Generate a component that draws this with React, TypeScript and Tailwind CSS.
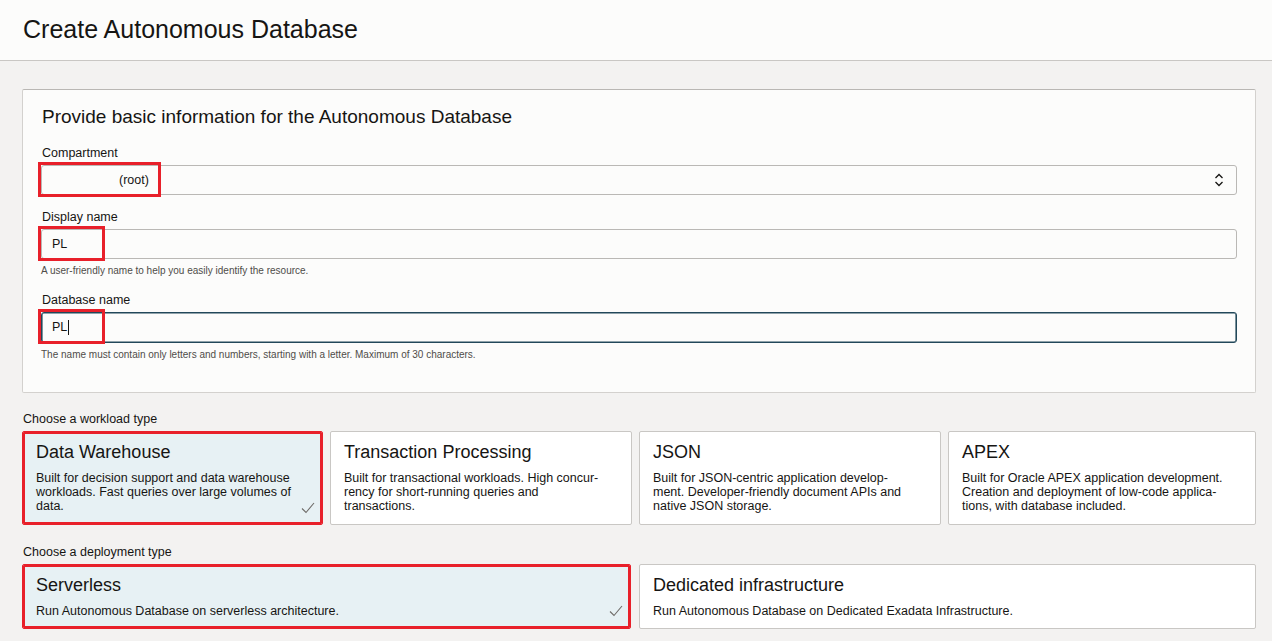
import React from 'react';

const font = { fontFamily: '"Liberation Sans", Arial, sans-serif' };

function RedMark({ w, h }: { w: number; h: number }) {
  return (
    <div
      className="pointer-events-none absolute -left-[3px] -top-[3px] border-[3px] border-[#e8202a]"
      style={{ width: w, height: h }}
    />
  );
}

function Check() {
  return (
    <svg width="14" height="12" viewBox="0 0 14 12" className="text-[#6f6c69]">
      <path d="M1 6.5 L5 10.5 L13 1" fill="none" stroke="currentColor" strokeWidth="1.1" />
    </svg>
  );
}

function Chevrons() {
  return (
    <svg width="10" height="14" viewBox="0 0 10 14" className="text-[#161513]">
      <path d="M1.5 5 L5 1.5 L8.5 5" fill="none" stroke="currentColor" strokeWidth="1.3" />
      <path d="M1.5 9 L5 12.5 L8.5 9" fill="none" stroke="currentColor" strokeWidth="1.3" />
    </svg>
  );
}

type Card = { title: string; lines: string[] };

const workloads: Card[] = [
  {
    title: 'Data Warehouse',
    lines: ['Built for decision support and data warehouse', 'workloads. Fast queries over large volumes of', 'data.'],
  },
  {
    title: 'Transaction Processing',
    lines: ['Built for transactional workloads. High concur-', 'rency for short-running queries and', 'transactions.'],
  },
  {
    title: 'JSON',
    lines: ['Built for JSON-centric application develop-', 'ment. Developer-friendly document APIs and', 'native JSON storage.'],
  },
  {
    title: 'APEX',
    lines: ['Built for Oracle APEX application development.', 'Creation and deployment of low-code applica-', 'tions, with database included.'],
  },
];

const deployments: Card[] = [
  { title: 'Serverless', lines: ['Run Autonomous Database on serverless architecture.'] },
  { title: 'Dedicated infrastructure', lines: ['Run Autonomous Database on Dedicated Exadata Infrastructure.'] },
];

function OptionCard({ card, selected, tall }: { card: Card; selected: boolean; tall?: boolean }) {
  return (
    <div
      className={
        'relative rounded-[2px] border px-[13px] pt-[9px] ' +
        (tall ? 'pb-[10px] ' : 'pb-[11px] ') +
        (selected
          ? 'border-[#e8202a] bg-[#e7f1f4] shadow-[inset_0_0_0_2px_#e8202a]'
          : 'border-[#c9c7c4] bg-white')
      }
    >
      <div className="text-[18px] leading-[22px] text-[#161513]">{card.title}</div>
      <div className="mt-2 text-[12.5px] leading-[14px] text-[#161513]">
        {card.lines.map((l) => (
          <div key={l} className="whitespace-nowrap">
            {l}
          </div>
        ))}
      </div>
      {selected && (
        <div className={'absolute right-[7px] ' + (tall ? 'bottom-[11px]' : 'bottom-[10px]')}>
          <Check />
        </div>
      )}
    </div>
  );
}

export default function App() {
  return (
    <div className="min-h-[641px] bg-[#f3f2f1] text-[#161513]" style={font}>
      <header className="h-[61px] border-b border-[#c9c7c4] bg-[#fcfcfb] px-[23px]">
        <h1 className="pt-[15px] text-[25px] leading-[28px]">Create Autonomous Database</h1>
      </header>

      <div className="pl-[22px] pr-[16px] pt-[28px]">
        <section className="rounded-[2px] border border-[#d3d1ce] border-t-[#b9b7b4] bg-[#fcfcfb] pl-[18px] pr-[18px] pt-[16px] pb-[31px]">
          <h2 className="pl-px text-[19px] leading-[22px]">Provide basic information for the Autonomous Database</h2>

          <label className="mt-[17px] block pl-px text-[12.5px] leading-[16px]">Compartment</label>
          <div className="relative mt-1">
            <div className="flex h-[30px] items-center justify-between rounded-[3px] border border-[#bab8b5] bg-[#fcfcfb] pl-[11px] pr-[12px]">
              <span className="pl-[66px] text-[12.5px]">(root)</span>
              <Chevrons />
            </div>
            <RedMark w={123} h={35} />
          </div>

          <label className="mt-[14px] block pl-px text-[12.5px] leading-[16px]">Display name</label>
          <div className="relative mt-1">
            <div className="flex h-[30px] items-center rounded-[3px] border border-[#bab8b5] bg-[#fcfcfb] px-[10px]">
              <span className="text-[12.5px]">PL</span>
            </div>
            <RedMark w={67} h={35} />
          </div>
          <p className="mt-[6px] text-[10px] leading-[12px] text-[#4f4c49]">
            A user-friendly name to help you easily identify the resource.
          </p>

          <label className="mt-[15px] block pl-px text-[12.5px] leading-[16px]">Database name</label>
          <div className="relative mt-1">
            <div className="flex h-[31px] items-center rounded-[3px] border border-[#22485a] bg-[#fcfcfb] px-[10px] shadow-[inset_0_0_0_0.6px_#22485a]">
              <span className="text-[12.5px]">PL</span>
              <span className="ml-[1px] h-[15px] w-px bg-[#161513]" />
            </div>
            <RedMark w={67} h={35} />
          </div>
          <p className="mt-[6px] text-[10px] leading-[12px] text-[#4f4c49]">
            The name must contain only letters and numbers, starting with a letter. Maximum of 30 characters.
          </p>
        </section>

        <div className="mt-[18px] pl-px text-[12.5px] leading-[16px]">Choose a workload type</div>
        <div className="mt-1 grid grid-cols-[301px_302px_302px_1fr] gap-[7px]">
          {workloads.map((c, i) => (
            <OptionCard key={c.title} card={c} selected={i === 0} />
          ))}
        </div>

        <div className="mt-[19px] pl-px text-[12.5px] leading-[16px]">Choose a deployment type</div>
        <div className="mt-1 grid grid-cols-[609px_1fr] gap-[8px]">
          {deployments.map((c, i) => (
            <OptionCard key={c.title} card={c} selected={i === 0} tall />
          ))}
        </div>
      </div>
    </div>
  );
}
